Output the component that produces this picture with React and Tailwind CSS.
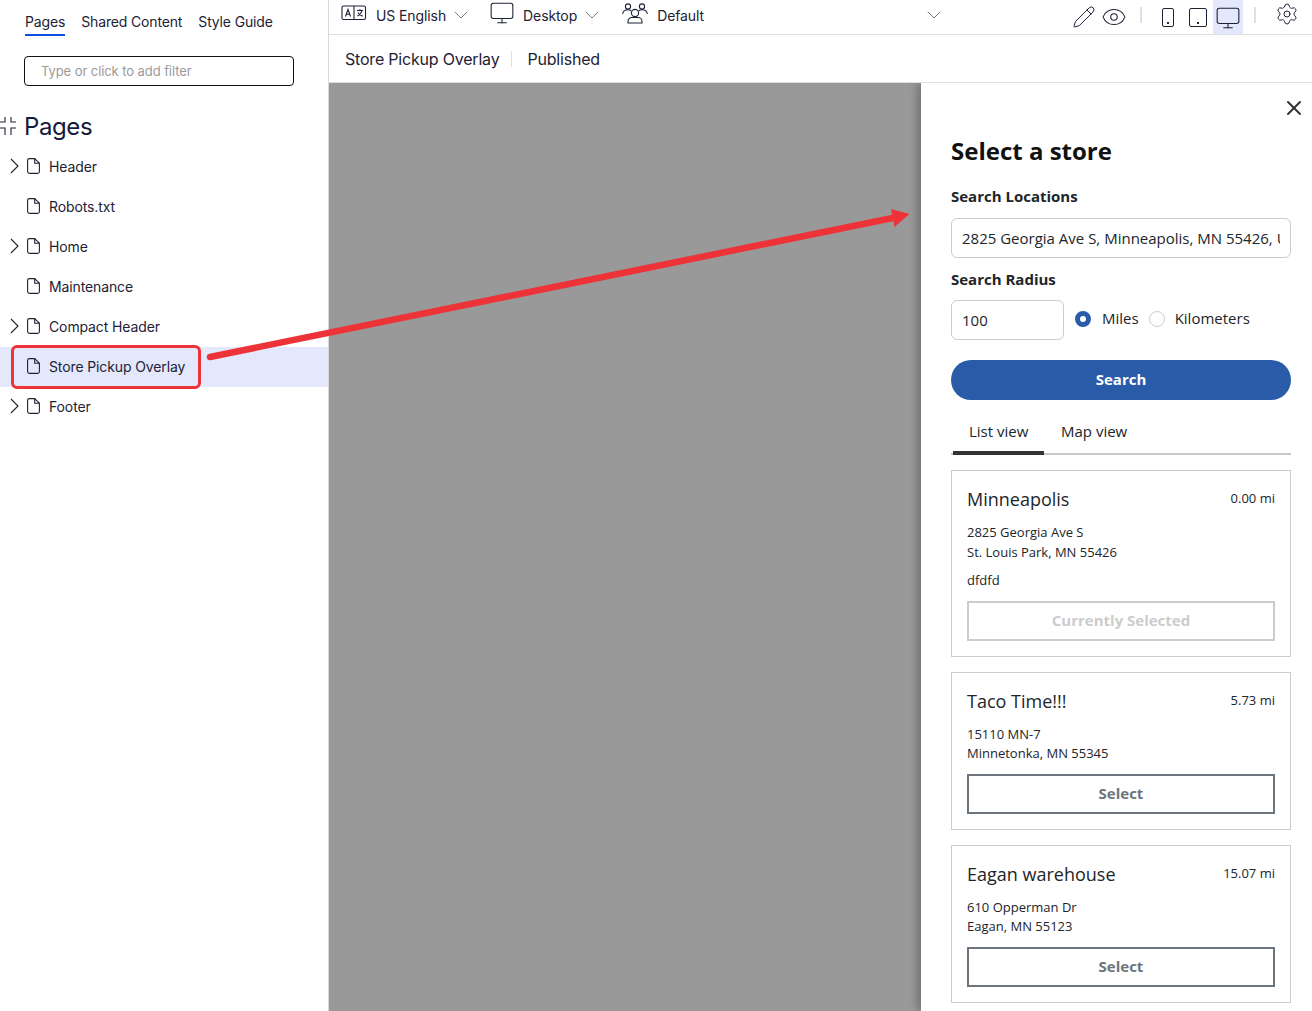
import { ChevronDown, Eye, Monitor, Pencil, Settings, X } from 'lucide-react';

const pages = [
  { name: 'Header', arrow: true },
  { name: 'Robots.txt' },
  { name: 'Home', arrow: true },
  { name: 'Maintenance' },
  { name: 'Compact Header', arrow: true },
  { name: 'Store Pickup Overlay', selected: true },
  { name: 'Footer', arrow: true },
];

const stores = [
  { name: 'Minneapolis', dist: '0.00 mi', lines: ['2825 Georgia Ave S', 'St. Louis Park, MN 55426'], note: 'dfdfd', selected: true },
  { name: 'Taco Time!!!', dist: '5.73 mi', lines: ['15110 MN-7', 'Minnetonka, MN 55345'] },
  { name: 'Eagan warehouse', dist: '15.07 mi', lines: ['610 Opperman Dr', 'Eagan, MN 55123'] },
];

const FileIcon = () => (
  <svg width="13" height="16" viewBox="0 0 13 16" fill="none" stroke="#1e2235" strokeWidth="1.1" className="shrink-0">
    <path d="M2.5.6h5.2l4.7 4.7v8.2a1.9 1.9 0 0 1-1.9 1.9H2.5A1.9 1.9 0 0 1 .6 13.5v-11A1.9 1.9 0 0 1 2.5.6z" />
    <path d="M7.7.6v4.7h4.7" />
  </svg>
);

const TreeArrow = () => (
  <svg width="9" height="16" viewBox="0 0 9 16" fill="none" stroke="#1e2235" strokeWidth="1.1">
    <path d="M1 1l7 7-7 7" />
  </svg>
);

const Translate = () => (
  <svg width="26" height="16" viewBox="0 0 26 16" fill="none" stroke="#1e2235" strokeWidth="1.1" className="-mt-[4px]">
    <rect x="1" y="1" width="23.5" height="13.5" rx="1.5" />
    <path d="M13 1v13.5" />
    <path d="M4.5 11.5 7 4.5l2.5 7M5.4 9.2h3.2" />
    <path d="M16 5.5h6M19 4v1.5M21 5.5c-.6 2.6-2.4 4.6-4.6 5.6M17 7.5c.8 1.6 2.6 3 4.6 3.6" />
  </svg>
);

const People = () => (
  <svg width="26" height="23" viewBox="0 0 26 23" fill="none" stroke="#1e2235" strokeWidth="1.1" className="ml-[18px] -mt-[6px]">
    <circle cx="13" cy="12" r="3.6" />
    <path d="M6 22v-1.5a4 4 0 0 1 4-4h6a4 4 0 0 1 4 4V22z" />
    <circle cx="6" cy="5.5" r="2.6" />
    <path d="M.7 13c.2-2.600 2.300-4.200 5.300-4.200 1.300 0 2.400.3 3.200.9" />
    <circle cx="20" cy="5.500" r="2.600" />
    <path d="M25.300 13c-.2-2.600-2.300-4.200-5.300-4.200-1.300 0-2.400.3-3.200.9" />
  </svg>
);

const Device = ({ w }) => (
  <div className={`relative h-[19px] border border-[#1e2235] rounded-[2px] mt-[3px] ${w}`}>
    <div className="absolute bottom-[2px] left-1/2 -ml-[1px] w-[2px] h-[2px] bg-[#1e2235]" />
  </div>
);

const Divider = () => <div className="w-[2px] h-4 -mt-[2px] bg-[#e2e0df]" />;

function Sidebar() {
  return (
    <div className="w-[329px] shrink-0 border-r border-[#d9d9d9] bg-white font-['Inter',sans-serif] text-[#1e2235]">
      <div className="flex gap-4 pl-[25px] pt-[13px] text-[14px] leading-[18px] h-[36px] tracking-[-0.15px]">
        <div className="h-[23px] border-b-2 border-[#0b50e0]">Pages</div>
        <div>Shared Content</div>
        <div>Style Guide</div>
      </div>
      <div className="ml-[24px] mt-[20px] w-[270px] h-[30px] border border-[#111] rounded-[4px] pl-[16px] pt-[2px] flex items-center text-[13px] tracking-[-0.08px] text-[#9a9a9a]">
        Type or click to add filter
      </div>
      <div className="relative flex items-center h-[32px] mt-[25px] pl-[24px] text-[24px] tracking-[-0.4px] text-[#141a3c]">
        <svg width="17" height="18" viewBox="0 0 17 18" fill="none" stroke="#1e2235" strokeWidth="1.1" className="absolute left-0 top-[6px]">
          <path d="M5 0v5H0M11 0v5h5M5 18v-7H0M11 18v-7h5" />
        </svg>
        Pages
      </div>
      <div className="mt-[4px]">
        {pages.map((p) => (
          <div key={p.name} className={`relative flex items-center h-10 pb-[2px] text-[14px] tracking-[-0.12px] ${p.selected ? 'bg-[#e3e8fc]' : ''}`}>
            <div className="w-[27px] pl-[10px] shrink-0 flex items-center">
              {p.arrow && <TreeArrow />}
            </div>
            <FileIcon />
            <span className="ml-[9px]">{p.name}</span>
            {p.selected && <div className="absolute left-[11px] top-[-2px] w-[190px] h-[44px] border-[3px] border-[#ee3338] rounded-[6px]" />}
          </div>
        ))}
      </div>
    </div>
  );
}

function TopBar() {
  return (
    <div className="font-['Inter',sans-serif] text-[14px] text-[#1e2235] bg-white">
      <div className="flex items-center h-[35px] border-b border-[#dedede] pl-[12px] pb-[4px] tracking-[-0.1px]">
        <Translate />
        <span className="ml-[9px]">US English</span>
        <ChevronDown size={24} strokeWidth={0.8} className="ml-[3px] text-[#555b70]" />
        <Monitor size={26} strokeWidth={1} className="ml-[16px] -mt-[4px]" />
        <span className="ml-[8px]">Desktop</span>
        <ChevronDown size={24} strokeWidth={0.8} className="ml-[3px] text-[#555b70]" />
        <People />
        <span className="ml-[9px]">Default</span>
        <ChevronDown size={24} strokeWidth={0.8} className="ml-[218px] text-[#555b70]" />
        <Pencil size={24} strokeWidth={1} className="ml-[126px] mt-[4px]" />
        <Eye size={26} strokeWidth={1} className="ml-[5px] mt-[3px]" />
        <div className="ml-[13px] mt-[2px]"><Divider /></div>
        <div className="ml-[20px] mt-[2px]"><Device w="w-[12px]" /></div>
        <div className="ml-[15px] mt-[2px]"><Device w="w-[18px]" /></div>
        <div className="ml-[6px] self-start w-[30px] h-[34px] bg-[#e3e8fc] flex items-center justify-center pt-[2px]">
          <Monitor size={26} strokeWidth={1} />
        </div>
        <div className="ml-[11px] mt-[2px]"><Divider /></div>
        <Settings size={24} strokeWidth={1} className="ml-[19px] -mt-[2px]" />
      </div>
      <div className="flex items-center h-[48px] border-b border-[#dedede] pl-[16px] text-[16px] tracking-[-0.2px]">
        <span>Store Pickup Overlay</span>
        <div className="w-px h-4 bg-[#e2e0df] ml-[12px] mr-[15px]" />
        <span>Published</span>
      </div>
    </div>
  );
}

function StoreCard({ store }) {
  return (
    <div className="border border-[#cccccc] px-[15px] pt-[15px] pb-[15px]">
      <div className="flex justify-between">
        <div className="text-[18px] leading-[26px]">{store.name}</div>
        <div className="text-[13px] leading-[24px]">{store.dist}</div>
      </div>
      <div className="mt-[11px] text-[13px] leading-[19.5px]">
        {store.lines.map((l) => <div key={l}>{l}</div>)}
      </div>
      {store.note && <div className="mt-[9px] text-[13px] leading-[19.5px]">{store.note}</div>}
      <div className={`mt-[10px] h-[40px] border-2 flex items-center justify-center text-[15px] font-bold ${store.selected ? 'border-[#cccccc] text-[#cccccc]' : 'border-[#6c757d] text-[#6c757d]'}`}>
        {store.selected ? 'Currently Selected' : 'Select'}
      </div>
    </div>
  );
}

function StorePanel() {
  return (
    <div className="relative w-[391px] h-full bg-white pl-[30px] pr-[21px] font-['Open_Sans',sans-serif] text-[#212529] shadow-[-4px_0_8px_rgba(0,0,0,0.25)]">
      <X size={24} strokeWidth={2} className="absolute right-[6px] top-[13px] text-[#333]" />
      <div className="pt-[51px] text-[24px] leading-[34px] font-bold text-[#111]">Select a store</div>
      <div className="mt-[18px] text-[15px] leading-[20px] font-bold">Search Locations</div>
      <div className="mt-[12px] h-[40px] border border-[#cccccc] rounded-[6px] px-[10px] flex items-center text-[15px] whitespace-nowrap">
        <span className="overflow-hidden">2825 Georgia Ave S, Minneapolis, MN 55426, USA</span>
      </div>
      <div className="mt-[11px] text-[15px] leading-[20px] font-bold">Search Radius</div>
      <div className="mt-[11px] flex items-center text-[15px]">
        <div className="w-[113px] h-[40px] border border-[#cccccc] rounded-[6px] pl-[10px] flex items-center">100</div>
        <div className="ml-[11px] w-4 h-4 rounded-full border-[5px] border-[#2a5ba8] bg-white -mt-[3px]" />
        <span className="ml-[11px] -mt-[3px]">Miles</span>
        <div className="ml-[10px] w-4 h-4 rounded-full border border-[#cccccc] bg-white -mt-[3px]" />
        <span className="ml-[10px] -mt-[3px]">Kilometers</span>
      </div>
      <div className="mt-[20px] h-[40px] pb-[2px] rounded-full bg-[#2a5ba8] flex items-center justify-center text-[15px] font-bold text-white">Search</div>
      <div className="mt-[12px] flex h-[43px] border-b-2 border-[#c8c8c8] text-[15px]">
        <div className="w-[91px] h-[43px] pl-[16px] pt-[8px] border-b-[4px] border-[#333333] ml-[2px]">List view</div>
        <div className="pl-[17px] pt-[8px]">Map view</div>
      </div>
      <div className="mt-[15px] flex flex-col gap-[15px]">
        {stores.map((s) => <StoreCard key={s.name} store={s} />)}
      </div>
    </div>
  );
}

export default function App() {
  return (
    <div className="relative flex h-[1011px] w-[1312px] overflow-hidden bg-white">
      <Sidebar />
      <div className="flex-1 flex flex-col min-w-0">
        <TopBar />
        <div className="flex-1 bg-[#999999] flex justify-end min-h-0 overflow-hidden">
          <StorePanel />
        </div>
      </div>
      {/* annotation arrow */}
      <svg width="1312" height="1011" className="absolute left-0 top-0 pointer-events-none">
        <path d="M210 357 L895 217.500" stroke="#ee3338" strokeWidth="6.5" strokeLinecap="round" fill="none" />
        <path d="M909.500 214 L891 209 L894.500 227 Z" fill="#ee3338" />
      </svg>
    </div>
  );
}
